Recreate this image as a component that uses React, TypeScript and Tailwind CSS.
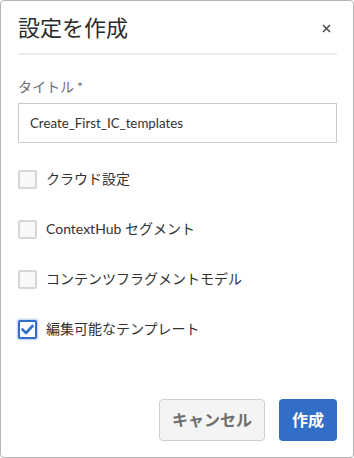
import React, { useState } from 'react';

const font = { fontFamily: 'Lato, "Noto Sans CJK JP", sans-serif' };

const options = [
    { id: 'cloud', label: 'クラウド設定' },
    { id: 'hub', label: 'ContextHub セグメント' },
    { id: 'cf', label: 'コンテンツフラグメントモデル' },
    { id: 'tpl', label: '編集可能なテンプレート' },
];

const Checkbox: React.FC<{ checked: boolean; label: string; onToggle: () => void }> = ({ checked, label, onToggle }) => (
    <label className="flex items-center h-[20px] cursor-pointer" onClick={onToggle}>
        {checked ? (
            <span className="w-[19px] h-[19px] rounded-[2px] border-2 border-[#326ec8] bg-white shadow-[0_0_2px_1px_rgba(50,110,200,0.35)] flex items-center justify-center">
                <svg width="13" height="11" viewBox="0 0 13 11" fill="none">
                    <path d="M1.5 5.5 L5 9 L11.5 2" stroke="#326ec8" strokeWidth="2.6" strokeLinecap="round" strokeLinejoin="round" />
                </svg>
            </span>
        ) : (
            <span className="w-[19px] h-[19px] rounded-[2px] border-2 border-[#d6d6d6] bg-[#f8f8f8]" />
        )}
        <span className="ml-[9px] text-[14px] leading-[20px] text-[#323232]">{label}</span>
    </label>
);

export default function App() {
    const [checked, setChecked] = useState<Record<string, boolean>>({ tpl: true });

    return (
        <div style={font} className="w-[354px] h-[458px] bg-white border border-[#b5b5b5] rounded-[4px] flex flex-col pl-[17px] pr-[16px] pt-[12px] pb-[16px]">
            <div className="flex items-center justify-between h-[30px]">
                <h1 className="text-[22px] leading-[30px] text-[#2c2c2c] font-normal">設定を作成</h1>
                <button className="w-[20px] h-[20px] mr-[1px] flex items-center justify-center">
                    <svg width="9" height="9" viewBox="0 0 9 9">
                        <path d="M1 1 L8 8 M8 1 L1 8" stroke="#4b4b4b" strokeWidth="1.5" />
                    </svg>
                </button>
            </div>
            <div className="mt-[10px] h-[2px] bg-[#ebebeb]" />

            <div className="mt-[22px] text-[14px] leading-[20px] text-[#6e6e6e]">
                タイトル<span className="ml-[3px]">*</span>
            </div>
            <input
                className="mt-[6px] h-[40px] w-full border border-[#cacaca] px-[11px] text-[13.3px] text-[#323232] outline-none"
                defaultValue="Create_First_IC_templates"
            />

            <div className="mt-[26px] flex flex-col gap-[30px]">
                {options.map(o => (
                    <Checkbox
                        key={o.id}
                        label={o.label}
                        checked={!!checked[o.id]}
                        onToggle={() => setChecked(c => ({ ...c, [o.id]: !c[o.id] }))}
                    />
                ))}
            </div>

            <div className="mt-auto flex justify-end gap-[14px]">
                <button className="h-[42px] w-[106px] rounded-[4px] border border-[#cfcfcf] bg-[#f4f4f4] text-[16px] font-bold text-[#6e6e6e]">
                    キャンセル
                </button>
                <button className="h-[42px] w-[58px] rounded-[4px] bg-[#326ec8] text-[16px] font-bold text-white">
                    作成
                </button>
            </div>
        </div>
    );
}
